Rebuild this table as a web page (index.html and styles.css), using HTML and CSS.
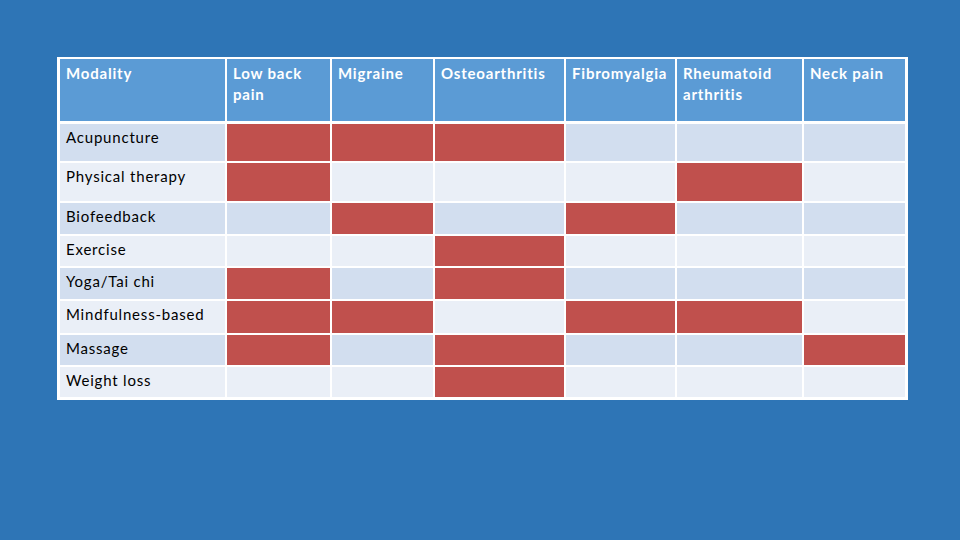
FILE: index.html
```html
<!DOCTYPE html>
<html lang="en">
<head>
<meta charset="utf-8">
<title>Modality table</title>
<link rel="stylesheet" href="styles.css">
</head>
<body>
<main class="slide">
  <div class="table">
    <div class="cell head">Modality</div>
    <div class="cell head">Low back<br>pain</div>
    <div class="cell head">Migraine</div>
    <div class="cell head">Osteoarthritis</div>
    <div class="cell head">Fibromyalgia</div>
    <div class="cell head">Rheumatoid<br>arthritis</div>
    <div class="cell head">Neck pain</div>

    <div class="cell odd">Acupuncture</div>
    <div class="cell odd yes"></div>
    <div class="cell odd yes"></div>
    <div class="cell odd yes"></div>
    <div class="cell odd"></div>
    <div class="cell odd"></div>
    <div class="cell odd"></div>

    <div class="cell even">Physical therapy</div>
    <div class="cell even yes"></div>
    <div class="cell even"></div>
    <div class="cell even"></div>
    <div class="cell even"></div>
    <div class="cell even yes"></div>
    <div class="cell even"></div>

    <div class="cell odd">Biofeedback</div>
    <div class="cell odd"></div>
    <div class="cell odd yes"></div>
    <div class="cell odd"></div>
    <div class="cell odd yes"></div>
    <div class="cell odd"></div>
    <div class="cell odd"></div>

    <div class="cell even">Exercise</div>
    <div class="cell even"></div>
    <div class="cell even"></div>
    <div class="cell even yes"></div>
    <div class="cell even"></div>
    <div class="cell even"></div>
    <div class="cell even"></div>

    <div class="cell odd">Yoga/Tai chi</div>
    <div class="cell odd yes"></div>
    <div class="cell odd"></div>
    <div class="cell odd yes"></div>
    <div class="cell odd"></div>
    <div class="cell odd"></div>
    <div class="cell odd"></div>

    <div class="cell even">Mindfulness-based</div>
    <div class="cell even yes"></div>
    <div class="cell even yes"></div>
    <div class="cell even"></div>
    <div class="cell even yes"></div>
    <div class="cell even yes"></div>
    <div class="cell even"></div>

    <div class="cell odd">Massage</div>
    <div class="cell odd yes"></div>
    <div class="cell odd"></div>
    <div class="cell odd yes"></div>
    <div class="cell odd"></div>
    <div class="cell odd"></div>
    <div class="cell odd yes"></div>

    <div class="cell even">Weight loss</div>
    <div class="cell even"></div>
    <div class="cell even"></div>
    <div class="cell even yes"></div>
    <div class="cell even"></div>
    <div class="cell even"></div>
    <div class="cell even"></div>
  </div>
</main>
</body>
</html>
```

FILE: styles.css
```css
html, body {
  margin: 0;
  padding: 0;
  background: #2e75b6;
}

.slide {
  width: 960px;
  height: 540px;
  box-sizing: border-box;
  padding: 57px 0 0 57px;
  font-family: Lato, "Liberation Sans", sans-serif;
  font-size: 15px;
  line-height: 21px;
  letter-spacing: 0.8px;
}

.table {
  display: grid;
  width: max-content;
  background: #ffffff;
  padding: 2px 3px 3px 3px;
  gap: 2px;
  grid-template-columns: 165px 103px 101px 129px 109px 125px 101px;
  grid-template-rows: 63px 37px 38px 31px 30px 31px 32px 30px 30px;
}

.cell {
  padding: 3px 6px;
  color: #000000;
}

.head {
  background: #5b9bd5;
  color: #ffffff;
  font-weight: 700;
  margin-bottom: 1px;
  padding-top: 4px;
}

.odd {
  background: #d2deef;
}

.even {
  background: #eaeff7;
}

.yes {
  background: #c0504d;
}
```
